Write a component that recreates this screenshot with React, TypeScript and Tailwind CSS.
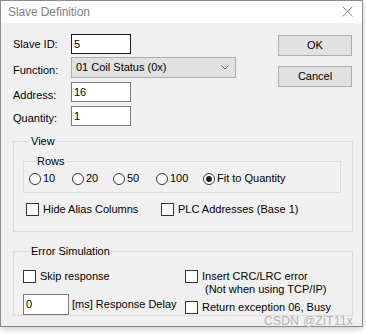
import React from 'react';

const font = "font-['Liberation_Sans',Arial,sans-serif]";

function Radio({ label, checked, width }: { label: string; checked?: boolean; width?: string }) {
  return (
    <div className={`flex items-center h-[13px] ${width ?? ''}`}>
      <span className="w-[12px] h-[12px] rounded-full border border-[#333] bg-white flex items-center justify-center shrink-0">
        {checked && <span className="w-[6px] h-[6px] rounded-full bg-[#222]" />}
      </span>
      <span className="ml-[2px] leading-[13px]">{label}</span>
    </div>
  );
}

function Check({ children, width }: { children: React.ReactNode; width?: string }) {
  return (
    <div className={`flex items-start ${width ?? ''}`}>
      <span className="w-[13px] h-[13px] border border-[#333] bg-white shrink-0" />
      <div className="ml-[4px] leading-[13px]">{children}</div>
    </div>
  );
}

export default function App() {
  return (
    <div className={`w-[366px] h-[334px] bg-white relative overflow-hidden text-[11px] text-black ${font}`}>
      <div className="w-[363px] h-[327px] border border-[#8c8c8c] bg-[#f0f0f0] flex flex-col shadow-[0_2px_6px_rgba(0,0,0,0.22)]">
        {/* Title bar */}
        <div className="h-[22px] bg-white flex items-center justify-between pl-[7px] pr-[9px] shrink-0">
          <span className="text-[12px] text-[#7f7f7f] tracking-[-0.1px] mt-[-1px]">Slave Definition</span>
          <svg width="11" height="11" viewBox="0 0 11 11" className="mt-[-2px]">
            <path d="M0.5 0.5 L10.5 10.5 M10.5 0.5 L0.5 10.5" stroke="#8a8a8a" strokeWidth="1" />
          </svg>
        </div>

        {/* Client */}
        <div className="flex flex-col pl-[12px] pr-[10px] pt-[11px] relative flex-1">
          <div className="flex">
            <div className="flex flex-col w-[223px]">
              <div className="flex h-[20px]">
                <span className="w-[58px] pt-[4px] leading-[13px]">Slave ID:</span>
                <div className="w-[60px] h-[20px] border border-[#1a1a1a] bg-white px-[2px] leading-[18px]">5</div>
              </div>
              <div className="flex h-[21px] mt-[3px]">
                <span className="w-[58px] pt-[7px] leading-[13px]">Function:</span>
                <div className="w-[165px] h-[21px] border border-[#adadad] bg-[#e1e1e1] pl-[4px] pr-[6px] flex items-center justify-between">
                  <span className="leading-[13px]">01 Coil Status (0x)</span>
                  <svg width="8" height="5" viewBox="0 0 8 5">
                    <path d="M0.5 0.5 L4 4 L7.5 0.5" stroke="#606060" strokeWidth="1" fill="none" />
                  </svg>
                </div>
              </div>
              <div className="flex h-[20px] mt-[4px]">
                <span className="w-[58px] pt-[7px] leading-[13px]">Address:</span>
                <div className="w-[60px] h-[20px] border border-[#7a7a7a] bg-white px-[2px] leading-[18px]">16</div>
              </div>
              <div className="flex h-[20px] mt-[4px]">
                <span className="w-[58px] pt-[6px] leading-[13px]">Quantity:</span>
                <div className="w-[60px] h-[20px] border border-[#7a7a7a] bg-white px-[2px] leading-[18px]">1</div>
              </div>
            </div>
            <div className="flex flex-col ml-[42px] pt-[1px]">
              <button className="w-[74px] h-[21px] border border-[#adadad] bg-[#e1e1e1] leading-[13px]">OK</button>
              <button className="w-[74px] h-[21px] border border-[#adadad] bg-[#e1e1e1] mt-[10px] leading-[13px]">Cancel</button>
            </div>
          </div>

          {/* View */}
          <fieldset className="mt-[9px] w-[340px] border border-[#dcdcdc] pl-[9px] pr-[11px] pt-[7px] pb-[15px]">
            <legend className="ml-[7px] px-[1px] leading-[13px]">View</legend>
            <fieldset className="border border-[#dcdcdc] pl-[5px] pt-[4px] pb-[7px]">
              <legend className="ml-[7px] px-[1px] leading-[13px]">Rows</legend>
              <div className="flex">
                <Radio label="10" width="w-[43px]" />
                <Radio label="20" width="w-[41px]" />
                <Radio label="50" width="w-[43px]" />
                <Radio label="100" width="w-[47px]" />
                <Radio label="Fit to Quantity" checked />
              </div>
            </fieldset>
            <div className="flex mt-[10px] ml-[3px]">
              <Check width="w-[135px]">Hide Alias Columns</Check>
              <Check>PLC Addresses (Base 1)</Check>
            </div>
          </fieldset>

          {/* Error Simulation */}
          <fieldset className="mt-[13px] w-[340px] border border-[#dcdcdc] pl-[9px] pr-[11px] pt-[12px] pb-0">
            <legend className="ml-[7px] px-[1px] leading-[13px]">Error Simulation</legend>
            <div className="flex">
              <div className="flex flex-col w-[162px]">
                <Check>Skip response</Check>
                <div className="flex items-center mt-[11px]">
                  <div className="w-[46px] h-[21px] border border-[#7a7a7a] bg-white px-[2px] leading-[19px]">0</div>
                  <span className="ml-[3px] leading-[13px]">[ms] Response Delay</span>
                </div>
              </div>
              <div className="flex flex-col">
                <Check>
                  <div>Insert CRC/LRC error</div>
                  <div className="pl-[3px]">(Not when using TCP/IP)</div>
                </Check>
                <div className="mt-[5px]">
                  <Check>Return exception 06, Busy</Check>
                </div>
              </div>
            </div>
          </fieldset>

          <span className="absolute right-[9px] bottom-[-4px] text-[12px] text-[#b4b4b4] tracking-[0.3px]">CSDN @ZiT11x</span>
        </div>
      </div>
    </div>
  );
}
